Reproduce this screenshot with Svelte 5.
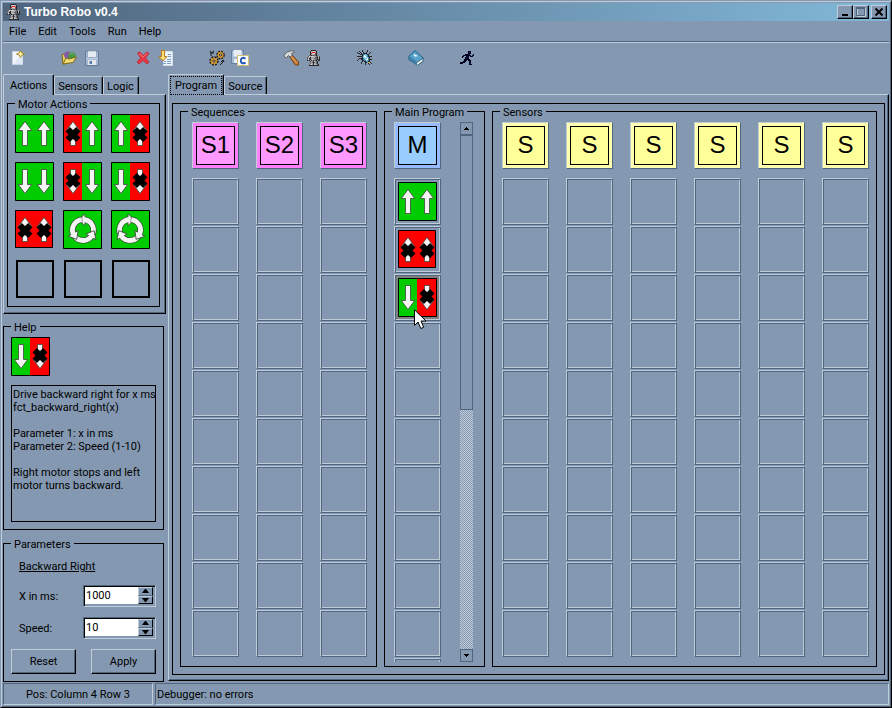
<script>
  let xMs = $state('1000');
  let speed = $state('10');

  const actions = [
    'up-up', 'stop-up', 'up-stop',
    'down-down', 'sdown-down', 'down-sdown',
    'stop-stop', 'ccw', 'cw',
    'none', 'none', 'none'
  ];
  const tools = [
    ['new'], ['open', 'save'], ['delete', 'import'], ['compile', 'savec'],
    ['build', 'robot'], ['bug'], ['book'], ['run']
  ];
  const rows = Array.from({ length: 10 }, (_, i) => i);
  const program = ['up-up', 'stop-stop', 'down-sdown'];

  const palette = {
    k: '#26282c', g: '#a8a8a8', w: '#d4d4d4', d: '#66666a', r: '#e01818',
    n: '#00001c', b: '#0c1c78', c: '#84c8e4', s: '#3c88b4', y: '#d8b030', p: '#e8f8ff'
  };
  const sprites = {
    robot: [
      '....kkkkk....',
      '...kgwwwgk...',
      '...kgrrrgk...',
      '...krwwwrk...',
      '...kggggdk...',
      '..ddkddddkd..',
      '.dwgwwwggddgd',
      'dggkggggddkgk',
      'dgkkgggdddkgk',
      'dwdkgwggddkdk',
      'kdk.kddddk.kk',
      '...dggkggdk..',
      '...dgdkdgdk..',
      '...dggkggdk..',
      '..dgwgkwggdk.',
      '..kkkkkkkkkk.'
    ],
    run: [
      '........nnn...',
      '........nbn...',
      '........nnn...',
      '.....nnnnn...n',
      '...nnnnnnnn.nb',
      '..nn..nnn.nnn.',
      '..n..nnbn.....',
      '.....nnnn.....',
      '....nnnnnn....',
      '....nnn.nnn...',
      '...nnn...nn...',
      'nnnnn....nn...',
      'nnn......nb...',
      '.........nnn..'
    ],
    bug: [
      '.....k....k....',
      '..k..k....k....',
      'k..k..k..k...k.',
      '.kk.k.kkkk..k..',
      '...kkksscskk...',
      '.....kspccsk...',
      'kkkkkkcppcskkkk',
      '.....kccpccsk..',
      '..kkkkscccpsk..',
      '.k..kksscppskkk',
      'k....kkssccsk..',
      '.....k.kksskk..',
      '....k...kk.yyk.',
      '....k...k..k..k',
      '........k...k..'
    ]
  };
  const halves = {
    up: ['#00cc00', 'up', false], down: ['#00cc00', 'down', false],
    stop: ['#ff0000', 'up', true], sdown: ['#ff0000', 'down', true]
  };
  const parts = (kind) => kind.split('-').map((p) => halves[p]);
</script>

{#snippet sprite(name)}
  <svg width={sprites[name][0].length} height={sprites[name].length} shape-rendering="crispEdges" aria-hidden="true">
    {#each sprites[name] as line, y}
      {#each line.split('') as ch, x}
        {#if ch !== '.'}<rect {x} {y} width="1" height="1" fill={palette[ch]} />{/if}
      {/each}
    {/each}
  </svg>
{/snippet}

{#snippet tile(kind)}
  <svg class="tile" width={kind === 'stop-stop' ? 38 : 39} height={kind === 'stop-stop' ? 38 : 39} viewBox={kind === 'stop-stop' ? '0 0 38 38' : '0 0 39 39'} aria-hidden="true">
    <rect width="39" height="39" fill="#00cc00" />
    {#if kind === 'cw' || kind === 'ccw'}
      <g transform={kind === 'cw' ? 'translate(19 20) scale(-1 1)' : 'translate(20 20)'}>
        {#each [0, 120, 240] as a}
          <g transform="rotate({a})">
            <path d="M9.4 4.6A10.5 10.5 0 0 0 1-10.5" fill="none" stroke="#3c4c3c" stroke-width="6.2" />
            <path d="M2-16V-4.5L-5-10Z" fill="#f4f4f4" stroke="#3c4c3c" stroke-width=".8" />
            <path d="M9.6 4.1A10.5 10.5 0 0 0 1-10.5" fill="none" stroke="#f4f4f4" stroke-width="4.8" />
          </g>
        {/each}
      </g>
    {:else}
      {#each parts(kind) as [color, dir, stopped], i}
        <rect x={i * 19} width={i ? 20 : 19} height="39" fill={color} shape-rendering="crispEdges" />
        <g transform="translate({i ? 29 : 10} 0)">
          <path transform={dir === 'down' ? 'matrix(1 0 0 -1 0 39)' : null} d="M0 7.5L6.7 16.5H2.5V31.5H-2.5V16.5H-6.7Z" fill="#f4f4f4" stroke="#404840" stroke-width=".8" />
          {#if stopped}
            <path transform="translate(0 {dir === 'down' ? 18.5 : 20.5})" d="M-5.3-5.3L5.3 5.3M5.3-5.3L-5.3 5.3" stroke="#000" stroke-width="6.2" />
          {/if}
        </g>
      {/each}
    {/if}
    <path d={kind === 'stop-stop' ? 'M.5.5H37.5V37.5H.5Z' : 'M.5.5H38.5V38.5H.5Z'} fill="none" stroke="#000" />
  </svg>
{/snippet}

{#snippet icon(name)}
  {#if name === 'robot' || name === 'run' || name === 'bug'}
    {@render sprite(name)}
  {:else}
    <svg width={name === 'savec' ? 19 : 16} height="16" viewBox={name === 'savec' ? '0 0 19 16' : '0 0 16 16'} aria-hidden="true">
      {#if name === 'new'}
        <path d="M2.5 1.5H9.5L12.5 5V14.5H2.5Z" fill="#f3f7fc" stroke="#c9d4e2" />
        <path d="M9 6.5H12.5V14H4Z" fill="#dfe8f4" />
        <path d="M10.5.5L11.8 2.8L14.5 4L11.8 5.2L10.5 7.5L9.3 5.2L6.5 4L9.3 2.8Z" fill="#fff0a0" stroke="#a08020" stroke-width=".9" />
      {:else if name === 'open'}
        <path d="M1 5L4 3.5L6 5L8 13L2 14Z" fill="#e8d060" stroke="#77651a" />
        <circle cx="6.8" cy="5.2" r="3.7" fill="#855aa8" />
        <circle cx="11" cy="6" r="3.8" fill="#459543" />
        <path d="M8 4Q11 2 13 5" fill="none" stroke="#75b66d" />
        <path d="M2 14L5 8L8 9L15.5 7L12 12.5Z" fill="#f0dd75" stroke="#806a17" />
      {:else if name === 'save'}
        <path d="M1.5 1.5H14.5V15.5H1.5Z" fill="#a4bad4" stroke="#5f7a9c" />
        <path d="M3.5 1H12.5V7.5H3.5Z" fill="#e6ebf2" stroke="#7890ae" stroke-width=".6" />
        <path d="M4 10H12V15H4Z" fill="#e4e8ee" /><path d="M5.5 11H8V14H5.5Z" fill="#567ca8" />
        <path d="M2 8.5H14" stroke="#c3d3e4" />
      {:else if name === 'delete'}
        <path d="M2.5 3L5 2L8 5.5L12 2L14 3.5L10.5 8L14 12L12 14L8 10.5L4 14L2 12L5.5 8Z" fill="#e73945" stroke="#ba2634" stroke-width=".8" />
        <path d="M4 3.5L8 7L12 3.5" fill="none" stroke="#f47a80" />
      {:else if name === 'import'}
        <path d="M5.5 1.5H14.5V15.5H5.5Z" fill="#edf3fb" stroke="#d3deea" />
        <path d="M10 4.5H13M10 6.5H13M6 11.5H8M9 9.5H13M9 11.5H13M5 13.5H8M9 13.5H13" stroke="#7e9dc9" />
        <path d="M3.5.5H6.5V6.5H9L5 11L1 6.5H3.5Z" fill="#ffdd79" stroke="#b77b22" />
      {:else if name === 'compile'}
        <g fill="#f4b944" stroke="#231c16">
          <circle cx="5" cy="11" r="3.7" stroke-width="2" stroke-dasharray="1.8 1.1" /><circle cx="5" cy="11" r="2.8" stroke="#c08828" /><circle cx="5" cy="11" r="1.2" fill="#fff" />
          <circle cx="11.5" cy="5" r="3.4" stroke-width="2" stroke-dasharray="1.7 1" /><circle cx="11.5" cy="5" r="2.6" stroke="#c08828" /><circle cx="11.5" cy="5" r="1.1" fill="#fff" />
        </g>
        <path d="M2 6V3L5 1M2 3L1 1M2 3H5M11 15L14 12V10M12 12L14 10L15 12" fill="none" stroke="#171b20" />
      {:else if name === 'savec'}
        <path d="M1.5.5H13.5V13.5H1.5Z" fill="#a4bad4" stroke="#6482a6" /><path d="M3.5 0H11.5V6.5H3.5Z" fill="#e9eef5" />
        <path d="M4 9H8V13H4Z" fill="#e6ebf1" />
        <path d="M7.5 5.5H18.5V15.5H7.5Z" fill="#fff" stroke="#d5bd76" />
        <path d="M15.5 8.5Q11 6.5 10.8 10.7Q11 14.5 15.5 12.8" fill="none" stroke="#2457b5" stroke-width="2" />
      {:else if name === 'build'}
        <path d="M6 6L8.5 4.5L15.5 12V15H12.5Z" fill="#c57c36" stroke="#754119" /><path d="M8 6L13.5 12.5" stroke="#eda95d" />
        <path d="M1 5L4 2L8 .8H11V2.5L8.5 3.5L9.5 5L7 7L5.5 5.5L3 8L1.5 7.5Z" fill="#d6d7d8" stroke="#5e6468" />
      {:else if name === 'book'}
        <path d="M.8 6.5L7 .7L15 8V11.5L9.5 15.3L.8 9.5Z" fill="#f0eee0" stroke="#276285" />
        <path d="M.8 6.5L7 .7L15.2 8L9 12.3Z" fill="#59a2ca" stroke="#276b94" /><path d="M1 7V10L9 15V12.5Z" fill="#397da5" />
        <path d="M6 4L9.5 5.5L8 7L5.5 5.5Z" fill="#eaf8ff" />
      {/if}
    </svg>
  {/if}
{/snippet}

{#snippet cells(count)}
  {#each { length: count } as _}
    <div class="cell"></div>
  {/each}
{/snippet}

<div class="window">
  <header class="title">
    {@render sprite('robot')}
    <h1>Turbo Robo v0.4</h1>
    <button aria-label="Minimize"><svg width="12" height="10"><path d="M3 7H9V9H3Z" fill="#000" /></svg></button>
    <button aria-label="Maximize"><svg width="12" height="10"><path d="M2.5 1.5H10.5V9.5H2.5Z" fill="none" stroke="#c1ccd9" /><path d="M1.5.5H9.5V8.5H1.5ZM1 1.5H10" fill="none" stroke="#50657e" /></svg></button>
    <button class="close" aria-label="Close"><svg width="12" height="10"><path d="M2.5 1.5L9.5 8.5M9.5 1.5L2.5 8.5" stroke="#000" stroke-width="1.8" /></svg></button>
  </header>

  <nav class="menu">
    {#each ['File', 'Edit', 'Tools', 'Run', 'Help'] as item}<button>{item}</button>{/each}
  </nav>

  <div class="toolbar">
    {#each tools as group}
      <div class="group">
        {#each group as name}<button aria-label={name}>{@render icon(name)}</button>{/each}
      </div>
    {/each}
  </div>

  <main>
    <aside>
      <div class="tabs">
        <button class="tab on">Actions</button><button class="tab">Sensors</button><button class="tab">Logic</button>
      </div>
      <section class="page actions-page">
        <fieldset class="actions">
          <legend>Motor Actions</legend>
          {#each actions as kind}
            {#if kind === 'none'}<div class="slot"></div>
            {:else}<button class="action" aria-label={kind}>{@render tile(kind)}</button>{/if}
          {/each}
        </fieldset>
      </section>

      <fieldset class="help">
        <legend>Help</legend>
        {@render tile('down-sdown')}
        <div class="text">Drive backward right for x ms<br />fct_backward_right(x)<br /><br />Parameter 1: x in ms<br />Parameter 2: Speed (1-10)<br /><br />Right motor stops and left<br />motor turns backward.</div>
      </fieldset>

      <fieldset class="params">
        <legend>Parameters</legend>
        <h2>Backward Right</h2>
        <div class="field">
          <label for="x-ms">X in ms:</label>
          <div class="spin">
            <input id="x-ms" bind:value={xMs} />
            <div class="steps">
              <button aria-label="Increase x"><svg width="7" height="4"><path d="M3 0H4L7 4H0Z" /></svg></button>
              <button aria-label="Decrease x"><svg width="7" height="4"><path d="M0 0H7L4 4H3Z" /></svg></button>
            </div>
          </div>
        </div>
        <div class="field">
          <label for="speed">Speed:</label>
          <div class="spin">
            <input id="speed" bind:value={speed} />
            <div class="steps">
              <button aria-label="Increase speed"><svg width="7" height="4"><path d="M3 0H4L7 4H0Z" /></svg></button>
              <button aria-label="Decrease speed"><svg width="7" height="4"><path d="M0 0H7L4 4H3Z" /></svg></button>
            </div>
          </div>
        </div>
        <div class="buttons"><button>Reset</button><button>Apply</button></div>
      </fieldset>
    </aside>

    <div class="work">
      <div class="tabs">
        <button class="tab on focus"><span>Program</span></button><button class="tab">Source</button>
      </div>
      <section class="page program-page">
        <div class="frame">
          <fieldset class="lanes sequences">
            <legend>Sequences</legend>
            {#each ['S1', 'S2', 'S3'] as name}
              <div class="lane">
                <div class="head pink"><span>{name}</span></div>
                {@render cells(10)}
              </div>
            {/each}
          </fieldset>

          <fieldset class="lanes main-lane">
            <legend>Main Program</legend>
            <div class="lane">
              <div class="head blue"><span>M</span></div>
              {#each rows as r}
                <div class="cell" class:selected={r === 2}>
                  {#if program[r]}{@render tile(program[r])}{/if}
                  {#if r === 2}
                    <svg class="cursor" width="13" height="21" viewBox="0 0 13 21" aria-hidden="true">
                      <path d="M.5.8V16.5L4 13L6.8 19.5L9.7 18.3L7 12H12Z" fill="#fff" stroke="#000" />
                    </svg>
                  {/if}
                </div>
              {/each}
              <div class="cell partial"></div>
            </div>
            <div class="scroll">
              <button aria-label="Scroll up"><svg width="5" height="3"><path d="M2 0H3V1H4V2H5V3H0V2H1V1H2Z" /></svg></button>
              <div class="thumb"></div>
              <div class="trough"></div>
              <button aria-label="Scroll down"><svg width="5" height="3"><path d="M0 0H5V1H4V2H3V3H2V2H1V1H0Z" /></svg></button>
            </div>
          </fieldset>

          <fieldset class="lanes sensors">
            <legend>Sensors</legend>
            {#each { length: 6 } as _}
              <div class="lane">
                <div class="head yellow"><span>S</span></div>
                {@render cells(10)}
              </div>
            {/each}
          </fieldset>
        </div>
      </section>
    </div>
  </main>

  <footer><div class="pos">Pos: Column 4 Row 3</div><div class="debug">Debugger: no errors</div></footer>
</div>

<style>
  :global(body) { background: #8499b1; }
  .window {
    --base: #8499b1;
    --light: #c1ccd9;
    --dark: #50657e;
    box-sizing: border-box;
    min-height: 100vh;
    display: flex;
    flex-direction: column;
    padding: 2px;
    border: 1px solid;
    border-color: var(--base) #000 #000 var(--base);
    box-shadow: inset 1px 1px var(--light), inset -1px -1px var(--dark);
    background: var(--base);
    color: #000;
    font: 11px/13px Roboto, "Liberation Sans", Arial, sans-serif;
  }
  .window * { box-sizing: border-box; }
  svg { display: block; flex: none; }
  button { margin: 0; padding: 0; border: 0; background: none; color: inherit; font: inherit; }
  h1, h2 { margin: 0; font-size: inherit; }

  .title {
    display: flex;
    align-items: center;
    height: 18px;
    padding: 0 2px 0 4px;
    background: linear-gradient(90deg, #50657e, #82b8d8);
  }
  .title h1 { flex: 1; margin-left: 4px; color: #fff; font: bold 12px/14px "Liberation Sans", Arial, sans-serif; }
  .title button {
    display: grid;
    place-items: center;
    width: 16px;
    height: 14px;
    border: 1px solid;
    border-color: var(--light) #000 #000 var(--light);
    box-shadow: inset -1px -1px var(--dark);
    background: var(--base);
  }
  .title .close { margin-left: 2px; }

  .menu { display: flex; height: 21px; border-bottom: 1px solid var(--dark); }
  .menu button { padding: 0 6px; }
  .toolbar { display: flex; gap: 28px; height: 32px; padding: 0 3px 2px; border-top: 1px solid var(--light); }
  .group { display: flex; }
  .group button { display: grid; place-items: center; width: 23px; }

  main { flex: 1; display: flex; gap: 2px; }
  aside { flex: none; width: 163px; display: flex; flex-direction: column; }
  .work { flex: 1; display: flex; flex-direction: column; margin-bottom: 1px; }
  .tabs { display: flex; align-items: flex-end; height: 20px; }
  .tab {
    height: 18px;
    padding: 1px 4px 0 3px;
    border: 1px solid;
    border-color: var(--light) #000 transparent var(--light);
    border-bottom: 0;
    border-radius: 2px 2px 0 0;
    box-shadow: inset -1px 0 var(--dark);
  }
  .tab.on { position: relative; height: 21px; margin-bottom: -1px; padding: 0 6px; background: var(--base); }
  .tab.focus { padding: 0 1px; }
  .focus span { display: block; padding: 2px 4px; border: 1px dotted #000; }
  .page {
    border: 1px solid;
    border-color: var(--light) #000 #000 var(--light);
    box-shadow: inset -1px -1px var(--dark);
  }
  .actions-page { padding: 1px 5px 6px 3px; }
  .program-page { flex: 1; display: flex; padding: 8px 3px 5px 3px; }

  fieldset { min-width: 0; margin: 0; border: 1px solid #000; }
  legend { padding: 2px 3px 0; line-height: 13px; }
  .actions { display: grid; grid-template-columns: repeat(3, 39px); gap: 9px; padding: 3px 7px 8px; }
  .slot { justify-self: end; width: 38px; height: 38px; margin-top: 2px; border: 2px solid #000; }
  .action { display: flex; align-items: flex-start; height: 39px; }

  .help, .params { margin-right: 2px; }
  .help { margin-top: 5px; padding: 3px 7px 7px; }
  .text { height: 137px; margin-top: 9px; padding: 2px 1px; border: 1px solid #000; white-space: nowrap; }
  .params { margin-top: 6px; padding: 9px 7px 7px; }
  h2 { margin: 0 8px 11px; font-weight: normal; line-height: 14px; text-decoration: underline; }
  .field { display: flex; justify-content: space-between; align-items: center; margin-bottom: 10px; padding-left: 8px; }
  .spin {
    display: flex;
    width: 73px;
    height: 22px;
    padding: 1px 2px 2px 1px;
    border: 1px solid;
    border-color: var(--dark) var(--light) var(--light) var(--dark);
    box-shadow: inset 1px 1px #000;
    background: var(--base);
  }
  .spin input { flex: 1; min-width: 0; padding: 0 1px; border: 0; outline: 0; background: #fff; font: inherit; }
  .steps { display: flex; flex-direction: column; width: 15px; }
  .steps button {
    flex: 1;
    display: grid;
    place-items: center;
    border: 1px solid;
    border-color: var(--light) #000 var(--dark) var(--light);
  }
  .steps button:last-child { border-bottom-color: #000; }
  .buttons { display: flex; justify-content: space-between; }
  .buttons button {
    width: 65px;
    height: 25px;
    border: 1px solid;
    border-color: var(--light) #000 #000 var(--light);
    box-shadow: inset -1px -1px var(--dark);
  }

  .frame { flex: 1; display: flex; gap: 7px; padding: 0 7px 7px; border: 1px solid #000; }
  .lanes { display: flex; gap: 17px; padding: 3px 7px 8px 9px; }
  .lanes legend { margin-left: -2px; }
  .sequences { width: 197px; padding-left: 11px; }
  .sequences legend { margin-left: -4px; }
  .main-lane { width: 101px; gap: 19px; padding-bottom: 4px; }
  .sensors { flex: 1; }
  .lane { display: flex; flex-direction: column; gap: 1px; width: 47px; }
  .head {
    display: grid;
    height: 47px;
    margin-bottom: 8px;
    padding: 3px;
    border: 1px solid;
    border-color: var(--light) var(--dark) var(--dark) var(--light);
    font: 24px/28px "Liberation Sans", Arial, sans-serif;
  }
  .head span { display: grid; place-items: center; padding-bottom: 2px; border: 1px solid #000; }
  .pink { background: #ff80ff; }
  .pink span { background: #ff99ff; }
  .blue { background: #99bbff; }
  .blue span { background: #99ccff; }
  .yellow { background: #ffffb0; }
  .yellow span { background: #ffff99; }
  .cell {
    position: relative;
    height: 47px;
    padding: 3px;
    border: 1px solid;
    border-color: var(--light) var(--dark) var(--dark) var(--light);
    box-shadow: inset 1px 1px var(--dark), inset -1px -1px var(--light);
  }
  .selected { background: #808080; }
  .partial { height: 4px; padding: 0; border-bottom: 0; box-shadow: inset 1px 1px var(--dark), inset -1px 0 var(--light); }
  .cursor { position: absolute; left: 19px; top: 34px; z-index: 1; }
  .scroll { display: flex; flex-direction: column; width: 13px; }
  .scroll button { display: grid; place-items: center; height: 13px; border: 1px solid var(--dark); }
  .thumb { flex: 274; border: 1px solid var(--dark); }
  .trough { flex: 240; background: repeating-conic-gradient(var(--light) 0 25%, var(--base) 0 50%) 0 0 / 2px 2px; }

  footer { display: flex; gap: 2px; margin-top: 1px; }
  footer div { height: 22px; padding: 4px 1px; border: 1px solid; border-color: var(--dark) var(--light) var(--light) var(--dark); }
  .pos { width: 150px; text-align: center; }
  .debug { flex: 1; }
</style>
